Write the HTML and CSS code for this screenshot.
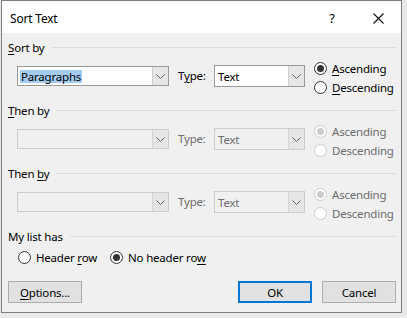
FILE: index.html
```html
<!DOCTYPE html>
<html>
<head>
<meta charset="utf-8">
<link rel="stylesheet" href="styles.css">
</head>
<body>
<div class="window">
  <div class="titlebar">
    <div class="title">Sort Text</div>
    <div class="tb-btn help">?</div>
    <div class="tb-btn close">
      <svg width="11" height="11" viewBox="0 0 11 11"><path d="M0.5 0.5 L10.5 10.5 M10.5 0.5 L0.5 10.5" stroke="#111" stroke-width="1.1" fill="none"/></svg>
    </div>
  </div>
  <div class="client">
    <div class="section">
      <div class="group-head"><span class="glabel"><u>S</u>ort by</span><span class="gline"></span></div>
      <div class="row">
        <div class="combo field"><span class="ctext"><span class="sel">Paragraphs</span></span><span class="cbtn"><svg width="9" height="5" viewBox="0 0 9 5"><path d="M0.5 0.5 L4.5 4.5 L8.5 0.5" stroke="#606060" fill="none"/></svg></span></div>
        <span class="tlabel">T<u>y</u>pe:</span>
        <div class="combo type"><span class="ctext">Text</span><span class="cbtn"><svg width="9" height="5" viewBox="0 0 9 5"><path d="M0.5 0.5 L4.5 4.5 L8.5 0.5" stroke="#606060" fill="none"/></svg></span></div>
        <div class="radios">
          <div class="radio on"><span class="rc"></span><span class="rt"><u>A</u>scending</span></div>
          <div class="radio"><span class="rc"></span><span class="rt"><u>D</u>escending</span></div>
        </div>
      </div>
    </div>
    <div class="section">
      <div class="group-head"><span class="glabel"><u>T</u>hen by</span><span class="gline"></span></div>
      <div class="row dis">
        <div class="combo field"><span class="ctext"></span><span class="cbtn"><svg width="9" height="5" viewBox="0 0 9 5"><path d="M0.5 0.5 L4.5 4.5 L8.5 0.5" stroke="#606060" fill="none"/></svg></span></div>
        <span class="tlabel">Type:</span>
        <div class="combo type"><span class="ctext">Text</span><span class="cbtn"><svg width="9" height="5" viewBox="0 0 9 5"><path d="M0.5 0.5 L4.5 4.5 L8.5 0.5" stroke="#606060" fill="none"/></svg></span></div>
        <div class="radios">
          <div class="radio on"><span class="rc"></span><span class="rt">Ascending</span></div>
          <div class="radio"><span class="rc"></span><span class="rt">Descending</span></div>
        </div>
      </div>
    </div>
    <div class="section">
      <div class="group-head"><span class="glabel">Then <u>b</u>y</span><span class="gline"></span></div>
      <div class="row dis">
        <div class="combo field"><span class="ctext"></span><span class="cbtn"><svg width="9" height="5" viewBox="0 0 9 5"><path d="M0.5 0.5 L4.5 4.5 L8.5 0.5" stroke="#606060" fill="none"/></svg></span></div>
        <span class="tlabel">Type:</span>
        <div class="combo type"><span class="ctext">Text</span><span class="cbtn"><svg width="9" height="5" viewBox="0 0 9 5"><path d="M0.5 0.5 L4.5 4.5 L8.5 0.5" stroke="#606060" fill="none"/></svg></span></div>
        <div class="radios">
          <div class="radio on"><span class="rc"></span><span class="rt">Ascending</span></div>
          <div class="radio"><span class="rc"></span><span class="rt">Descending</span></div>
        </div>
      </div>
    </div>
    <div class="section last">
      <div class="group-head"><span class="glabel">My list has</span><span class="gline"></span></div>
      <div class="hrow">
        <div class="radio"><span class="rc"></span><span class="rt">Header <u>r</u>ow</span></div>
        <div class="radio on"><span class="rc"></span><span class="rt">No header ro<u>w</u></span></div>
      </div>
    </div>
    <div class="buttons">
      <div class="btn"><u>O</u>ptions...</div>
      <div class="spacer"></div>
      <div class="btn default">OK</div>
      <div class="btn">Cancel</div>
    </div>
  </div>
</div>
</body>
</html>
```

FILE: styles.css
```css
* { box-sizing: border-box; }
html, body { margin: 0; padding: 0; }
body {
  width: 407px;
  height: 318px;
  background: #e9e9e9;
  font-family: "Noto Sans", "Segoe UI", sans-serif;
  font-size: 11.5px;
  letter-spacing: -0.2px;
  color: #000;
  overflow: hidden;
}
u { text-decoration: underline; text-underline-offset: 2px; }
.window {
  margin-left: 1px;
  width: 401px;
  height: 313px;
  border: 1px solid #7e7e7e;
  background: #f0f0f0;
  display: flex;
  flex-direction: column;
}
.titlebar {
  height: 32px;
  background: #fff;
  display: flex;
  align-items: center;
  flex-shrink: 0;
}
.title {
  flex: 1;
  padding-left: 8px;
  padding-top: 2px;
  font-size: 12px;
}
.tb-btn {
  width: 46px;
  height: 32px;
  display: flex;
  align-items: center;
  justify-content: center;
  padding-top: 2px;
}
.help { font-size: 13px; }
.client {
  padding: 6px 5px 0 6px;
  flex: 1;
  display: flex;
  flex-direction: column;
}
.section { height: 63px; }
.section.last { height: 53px; }
.group-head {
  height: 16px;
  display: flex;
  align-items: center;
}
.glabel { white-space: nowrap; }
.gline {
  flex: 1;
  height: 1px;
  background: #dcdcdc;
  margin-left: 7px;
  margin-top: 1px;
}
.row {
  margin-top: 3px;
  height: 41px;
  display: flex;
  align-items: flex-start;
  padding-left: 9px;
}
.row > * { flex-shrink: 0; }
.combo {
  display: flex;
  background: #fff;
  border: 1px solid #999;
}
.combo.field { width: 152px; height: 20px; margin-top: 8px; }
.combo.type { width: 91px; height: 22px; margin-top: 7px; }
.ctext {
  flex: 1;
  display: flex;
  align-items: center;
  padding-left: 2px;
  white-space: nowrap;
}
.combo.type .ctext { padding-left: 3px; }
.sel { background: #a3cbef; line-height: 13px; padding: 0 1px; }
.cbtn {
  width: 16px;
  background: #e6e6e6;
  border-left: 1px solid #cfcfcf;
  display: flex;
  align-items: center;
  justify-content: center;
}
.tlabel { margin-left: 9px; margin-top: 10px; width: 36px; }
.radios { margin-left: 9px; margin-top: 1px; }
.radio {
  height: 19px;
  display: flex;
  align-items: center;
  white-space: nowrap;
}
.rc {
  width: 13px;
  height: 13px;
  border-radius: 50%;
  border: 1px solid #333;
  background: #fff;
  display: flex;
  align-items: center;
  justify-content: center;
  margin-right: 5px;
  flex-shrink: 0;
}
.radio.on .rc::after {
  content: "";
  width: 7px;
  height: 7px;
  border-radius: 50%;
  background: #333;
}
.dis .combo { background: #f0f0f0; border-color: #cccccc; }
.dis .cbtn { background: #e6e6e6; border-left-color: #d5d5d5; }
.dis .tlabel, .dis .ctext, .dis .rt { color: #6d6d6d; }
.dis .rc { border-color: #cccccc; }
.dis .radio.on .rc::after { background: #cccccc; }
.hrow {
  margin-top: 4px;
  display: flex;
  padding-left: 10px;
}
.hrow .radio + .radio { margin-left: 13px; }
.buttons {
  display: flex;
}
.spacer { flex: 1; }
.btn {
  width: 74px;
  height: 22px;
  background: #e1e1e1;
  border: 1px solid #adadad;
  display: flex;
  align-items: center;
  justify-content: center;
}
.btn.default { border: 2px solid #0078d7; margin-right: 10px; }
```
